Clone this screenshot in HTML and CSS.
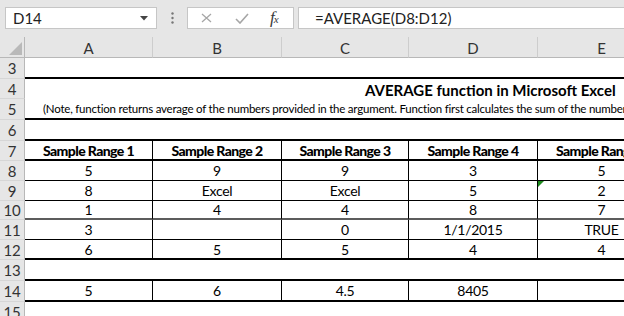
FILE: index.html
```html
<!DOCTYPE html>
<html lang="en">
<head>
    <meta charset="UTF-8">
    <meta name="viewport" content="width=device-width, initial-scale=1.0">
    <title>AVERAGE function in Microsoft Excel</title>
    <link rel="stylesheet" href="styles.css">
</head>
<body>
    <div class="app">
        <!-- Name box + formula bar -->
        <div class="formula-bar">
            <div class="name-box">
                <span>D14</span>
                <svg class="caret" width="8" height="5" viewBox="0 0 8 5"><path d="M0 0h8L4 4.5z" fill="#444"/></svg>
            </div>
            <div class="grip">
                <svg width="3" height="12" viewBox="0 0 3 12"><circle cx="1.5" cy="1.5" r="1.2" fill="#777"/><circle cx="1.5" cy="6" r="1.2" fill="#777"/><circle cx="1.5" cy="10.5" r="1.2" fill="#777"/></svg>
            </div>
            <div class="fx-box">
                <svg class="fx-icon" width="11" height="10" viewBox="0 0 11 10"><path d="M1 1l9 8M10 1l-9 8" stroke="#a6a6a6" stroke-width="1.3" fill="none"/></svg>
                <svg class="fx-icon" width="14" height="11" viewBox="0 0 14 11"><path d="M1 6l4 4 8-9" stroke="#a6a6a6" stroke-width="1.6" fill="none"/></svg>
                <span class="fx-label">f<small>x</small></span>
            </div>
            <div class="formula">=AVERAGE(D8:D12)</div>
        </div>

        <!-- Worksheet -->
        <div class="grid">
            <table class="sheet">
                <colgroup>
                    <col class="col-head">
                    <col class="col-a">
                    <col class="col-b">
                    <col class="col-c">
                    <col class="col-d">
                    <col class="col-e">
                </colgroup>
                <thead>
                    <tr>
                        <th class="corner">
                            <svg width="13" height="13" viewBox="0 0 13 13"><path d="M13 0v13H0z" fill="#b9b9b9"/></svg>
                        </th>
                        <th>A</th>
                        <th>B</th>
                        <th>C</th>
                        <th>D</th>
                        <th>E</th>
                    </tr>
                </thead>
                <tbody>
                    <tr class="r3 thick-bottom">
                        <th>3</th><td></td><td></td><td></td><td></td><td></td>
                    </tr>
                    <tr class="r4">
                        <th>4</th><td class="title" colspan="5">AVERAGE function in Microsoft Excel</td>
                    </tr>
                    <tr class="r5 thick-bottom">
                        <th>5</th><td class="note" colspan="5">(Note, function returns average of the numbers provided in the argument. Function first calculates the sum of the numbers and divides by the count.)</td>
                    </tr>
                    <tr class="r6 thick-bottom">
                        <th>6</th><td></td><td></td><td></td><td></td><td></td>
                    </tr>
                    <tr class="r7 boxed thick-bottom">
                        <th>7</th>
                        <td class="label">Sample Range 1</td>
                        <td class="label">Sample Range 2</td>
                        <td class="label">Sample Range 3</td>
                        <td class="label">Sample Range 4</td>
                        <td class="label">Sample Range 5</td>
                    </tr>
                    <tr class="r8 boxed thin-bottom">
                        <th>8</th><td>5</td><td>9</td><td>9</td><td>3</td><td>5</td>
                    </tr>
                    <tr class="r9 boxed thin-bottom">
                        <th>9</th><td>8</td><td>Excel</td><td>Excel</td><td>5</td><td class="flagged"><span class="error-mark"></span>2</td>
                    </tr>
                    <tr class="r10 boxed gray-bottom">
                        <th>10</th><td>1</td><td>4</td><td>4</td><td>8</td><td>7</td>
                    </tr>
                    <tr class="r11 boxed thin-bottom">
                        <th>11</th><td>3</td><td></td><td>0</td><td>1/1/2015</td><td>TRUE</td>
                    </tr>
                    <tr class="r12 boxed thick-bottom">
                        <th>12</th><td>6</td><td>5</td><td>5</td><td>4</td><td>4</td>
                    </tr>
                    <tr class="r13 thick-bottom">
                        <th>13</th><td></td><td></td><td></td><td></td><td></td>
                    </tr>
                    <tr class="r14 boxed thick-bottom">
                        <th>14</th><td>5</td><td>6</td><td>4.5</td><td>8405</td><td></td>
                    </tr>
                    <tr class="r15">
                        <th>15</th><td></td><td></td><td></td><td></td><td></td>
                    </tr>
                </tbody>
            </table>
        </div>
    </div>
</body>
</html>
```

FILE: styles.css
```css
body {
    margin: 0;
    font-family: Lato, "Noto Sans", sans-serif;
    background-color: #fff;
    color: #000;
}

.app {
    width: 624px;
    height: 316px;
    overflow: hidden;
}

/* ---------- formula bar ---------- */

.formula-bar {
    display: flex;
    align-items: flex-start;
    height: 37px;
    padding-top: 7px;
    box-sizing: border-box;
    background-color: #e6e6e6;
}

.name-box {
    display: flex;
    align-items: center;
    width: 152px;
    height: 22px;
    margin-left: 5px;
    padding-left: 7px;
    box-sizing: border-box;
    background: #fff;
    border: 1px solid #c6c6c6;
    font-size: 15px;
    color: #222;
}

.caret {
    margin-left: auto;
    margin-right: 8px;
}

.grip {
    display: flex;
    justify-content: center;
    align-items: center;
    width: 30px;
    height: 22px;
}

.fx-box {
    display: flex;
    align-items: center;
    width: 107px;
    height: 22px;
    box-sizing: border-box;
    background: #fff;
    border: 1px solid #c6c6c6;
}

.fx-icon:first-child {
    margin-left: 13px;
}

.fx-icon + .fx-icon {
    margin-left: 23px;
}

.fx-label {
    margin-left: 21px;
    font-family: "Liberation Serif", serif;
    font-style: italic;
    font-size: 17px;
    line-height: 18px;
    color: #3a3a3a;
    letter-spacing: -1px;
}

.fx-label small {
    font-size: 11px;
}

.formula {
    flex: 1;
    height: 22px;
    margin-left: 4px;
    padding-left: 16px;
    box-sizing: border-box;
    background: #fff;
    border: 1px solid #c6c6c6;
    border-right: none;
    font-size: 15px;
    line-height: 20px;
    color: #222;
}

/* ---------- worksheet ---------- */

.grid {
    width: 624px;
    overflow: hidden;
}

.sheet {
    table-layout: fixed;
    width: 666px;
    border-collapse: separate;
    border-spacing: 0;
    font-size: 14px;
    letter-spacing: -0.3px;
}

.col-head { width: 25px; }
.col-a { width: 128px; }
.col-b { width: 129px; }
.col-c { width: 127px; }
.col-d { width: 129px; }
.col-e { width: 128px; }

.sheet th,
.sheet td {
    padding: 0;
    white-space: nowrap;
    overflow: hidden;
}

.sheet thead th {
    height: 21px;
    padding-top: 2px;
    box-sizing: border-box;
    background-color: #e6e6e6;
    border-bottom: 1px solid #b8b8b8;
    border-right: 1px solid #cdcdcd;
    font-weight: normal;
    font-size: 15px;
    letter-spacing: 0;
    color: #333;
    text-align: center;
}

.sheet thead th.corner {
    border-right: 1px solid #b8b8b8;
    text-align: right;
    vertical-align: bottom;
    padding: 0 2px 2px 0;
}

.sheet thead th.corner svg {
    display: block;
    margin-left: auto;
}

.sheet tbody th {
    background-color: #e6e6e6;
    border-right: 1px solid #b8b8b8;
    border-bottom: 1px solid #d6d6d6;
    font-weight: normal;
    font-size: 15px;
    letter-spacing: -0.2px;
    color: #333;
    text-align: center;
}

.sheet tbody td {
    text-align: center;
    vertical-align: middle;
}

.sheet tbody tr { height: 20px; }
.sheet tbody tr.r3,
.sheet tbody tr.r5,
.sheet tbody tr.r6,
.sheet tbody tr.r13,
.sheet tbody tr.r14 { height: 21px; }
.sheet tbody tr.r10 { height: 19px; }

.thick-bottom td { border-bottom: 2px solid #000; }
.thin-bottom td { border-bottom: 1px solid #000; }
.gray-bottom td { border-bottom: 2px solid #5c5c5c; }

.boxed td { border-right: 1px solid #000; }

.label {
    font-weight: 900;
    font-size: 14px;
    letter-spacing: -0.6px;
}

.title {
    text-align: left !important;
    vertical-align: bottom !important;
    padding-left: 340px !important;
    font-weight: bold;
    font-size: 15px;
    letter-spacing: 0;
}

.note {
    text-align: left !important;
    padding-left: 18px !important;
    font-size: 11.5px;
    letter-spacing: -0.22px;
}

.flagged {
    position: relative;
}

.error-mark {
    position: absolute;
    left: 0;
    top: 0;
    width: 0;
    height: 0;
    border-top: 6px solid #1e8a1e;
    border-right: 6px solid transparent;
}
```
